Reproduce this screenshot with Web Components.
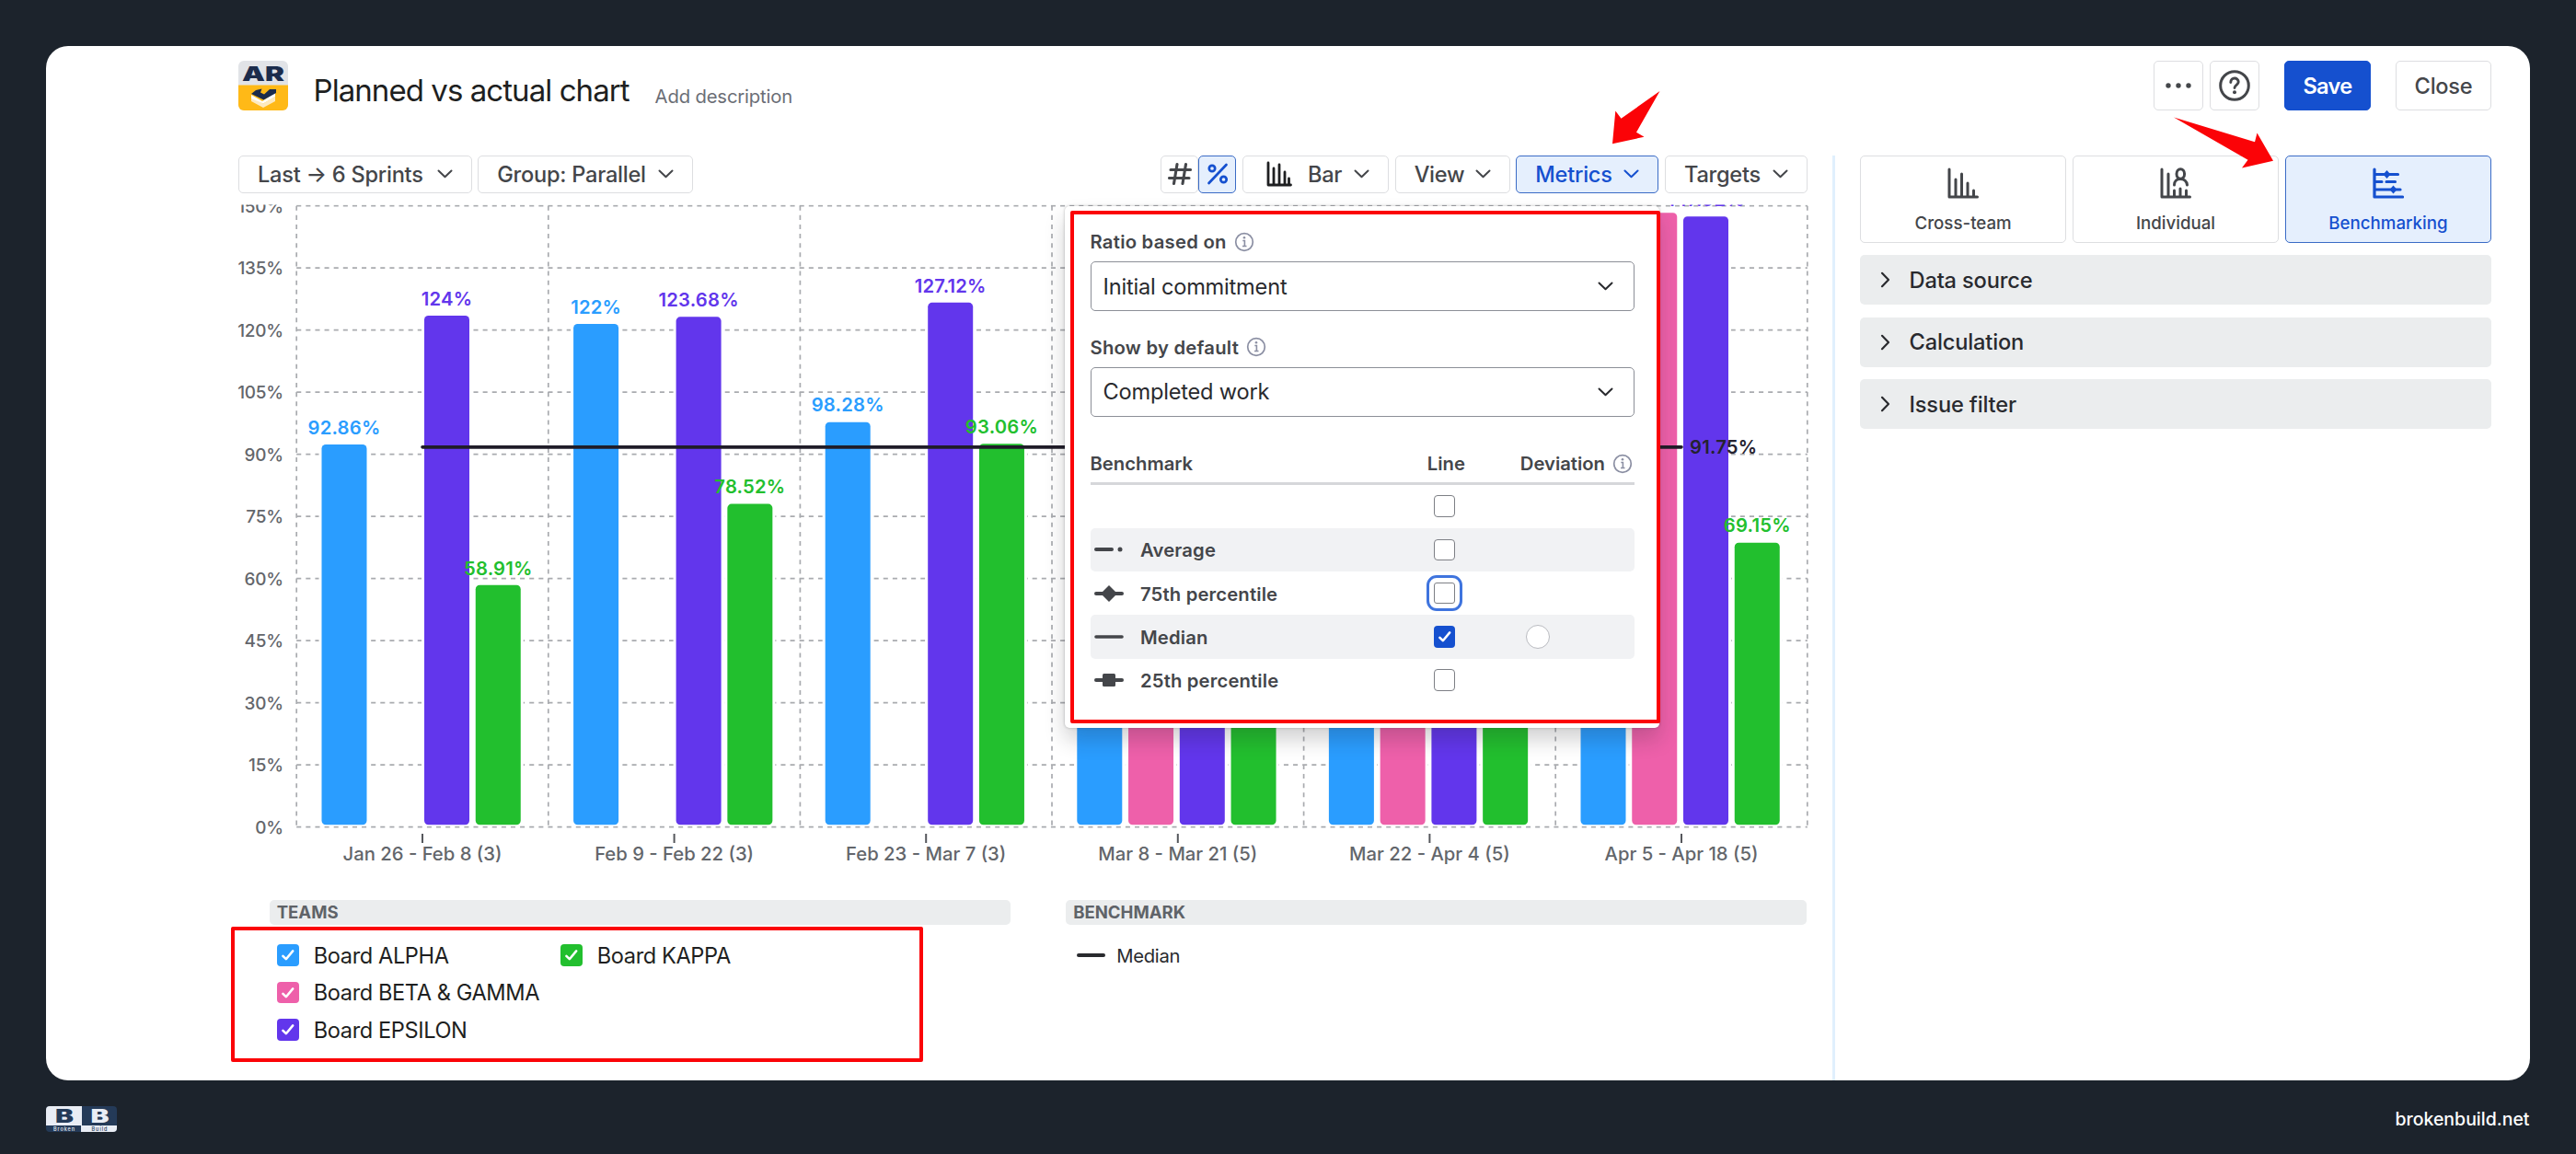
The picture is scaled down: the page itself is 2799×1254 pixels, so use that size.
<!DOCTYPE html>
<html lang="en">
<head>
<meta charset="utf-8">
<title>Planned vs actual chart</title>
<style>
    html, body {
        margin: 0;
        height: 100%;
        background: #1c232c;
        overflow: hidden;
    }
    body {
        font-family: Inter, "Liberation Sans", sans-serif;
        color: #44464a;
    }
</style>
</head>
<body>
<report-page></report-page>

<script>
const BLUE = '#1550cf';

function define(name, html, setup) {
    const template = document.createElement('template');
    template.innerHTML = html;
    customElements.define(name, class extends HTMLElement {
        constructor() {
            super();
            this.attachShadow({ mode: 'open' });
            this.shadowRoot.appendChild(template.content.cloneNode(true));
        }
        connectedCallback() {
            if (setup) {
                setup.call(this, this.shadowRoot);
            }
        }
    });
}

/* ---------- icons ---------- */

// name: [width, height, svg content]
const ICONS = {
    'chevron-down': [17, 10, '<path d="M1.5 1.5 8.5 8.3 15.5 1.5" fill="none" stroke="currentColor" stroke-width="2" stroke-linecap="round" stroke-linejoin="round"/>'],
    'chevron-right': [11, 18, '<path d="M2 1.8 9 9 2 16.2" fill="none" stroke="currentColor" stroke-width="2.2" stroke-linecap="round" stroke-linejoin="round"/>'],
    'hash': [26, 26, '<path d="M3 8.5H24.5M1.5 17.5H23M10 2.5 6.5 23.5M19.5 2.5 16 23.5" fill="none" stroke="currentColor" stroke-width="3.1" stroke-linecap="round"/>'],
    'percent': [24, 24, '<path d="M21.5 2 2.5 22" fill="none" stroke="currentColor" stroke-width="2.7" stroke-linecap="round"/><circle cx="6" cy="6" r="3.2" fill="none" stroke="currentColor" stroke-width="2.7"/><circle cx="18.5" cy="18" r="3.2" fill="none" stroke="currentColor" stroke-width="2.7"/>'],
    'bars': [34, 34, '<path d="M2 2V32H32.5M9 13V31M15.5 7V31M22 17V31M28.5 25V31" fill="none" stroke="currentColor" stroke-width="3" stroke-linecap="round" stroke-linejoin="round"/>'],
    'bars-small': [28, 28, '<path d="M2 2V26H26.5M8 8V25M14 4V25M20 12V25M24.5 19V25" fill="none" stroke="currentColor" stroke-width="2.8" stroke-linecap="round" stroke-linejoin="round"/>'],
    'person': [34, 34, '<path d="M2 2V32H32.5M9 7V31M15.5 25V31M22 23V31M28.5 25V31M15.5 19C15.5 15 18 12.5 22 12.5S29 15 29.5 19" fill="none" stroke="currentColor" stroke-width="3" stroke-linecap="round" stroke-linejoin="round"/><ellipse cx="22.3" cy="7" rx="4.3" ry="5.3" fill="none" stroke="currentColor" stroke-width="3"/>'],
    'sliders': [34, 34, '<path d="M2 2V32H32.5M3 7.5H27.5M3 15.5H10M15 15.5H24.5M3 24H30" fill="none" stroke="currentColor" stroke-width="3.2" stroke-linecap="round" stroke-linejoin="round"/><path d="M15.5 3 19.5 7.5 15.5 12 11.5 7.5ZM22.5 19.5 26.5 24 22.5 28.5 18.5 24Z" fill="currentColor"/>'],
    'more': [30, 8, '<g fill="currentColor"><circle cx="4" cy="4" r="2.7"/><circle cx="15" cy="4" r="2.7"/><circle cx="26" cy="4" r="2.7"/></g>'],
    'help': [36, 36, '<circle cx="18" cy="18" r="15.3" fill="none" stroke="currentColor" stroke-width="3"/><path d="M13.8 14.5C13.8 8.5 22.2 8.8 22.2 14C22.2 17.3 18 17.3 18 20.5" fill="none" stroke="currentColor" stroke-width="2.9" stroke-linecap="round"/><circle cx="18" cy="25.2" r="2" fill="currentColor"/>'],
    'info': [22, 22, '<circle cx="11" cy="11" r="9.3" fill="none" stroke="#8b8fa3" stroke-width="1.7"/><path d="M9.3 9.5H11.4V15.3M9 15.5H13.5" fill="none" stroke="#8b8fa3" stroke-width="1.6"/><circle cx="11" cy="6.3" r="1.3" fill="#8b8fa3"/>'],
    'average': [32, 20, '<path d="M2 10H19" stroke="currentColor" stroke-width="4" stroke-linecap="round"/><circle cx="28" cy="10" r="2.5" fill="currentColor"/>'],
    'p75': [32, 20, '<path d="M2 10H30" stroke="currentColor" stroke-width="4" stroke-linecap="round"/><path d="M16 1 25 10 16 19 7 10Z" fill="currentColor"/>'],
    'median': [32, 20, '<path d="M2 10H30" stroke="currentColor" stroke-width="3.6" stroke-linecap="round"/>'],
    'p25': [32, 20, '<path d="M2 10H30" stroke="currentColor" stroke-width="4" stroke-linecap="round"/><rect x="9" y="3" width="14" height="14" rx="1.5" fill="currentColor"/>']
};

define('app-icon', `
    <style>
        :host { display: inline-flex; flex: none; }
        svg { display: block; }
    </style>`, function (root) {
    const [w, h, body] = ICONS[this.getAttribute('name')];
    root.innerHTML += `<svg width="${w}" height="${h}" viewBox="0 0 ${w} ${h}">${body}</svg>`;
});

/* ---------- controls ---------- */

define('tool-button', `
    <style>
        :host {
            display: flex;
            align-items: center;
            justify-content: space-between;
            box-sizing: border-box;
            height: 40.5px;
            padding: 0 20px;
            border: 1.7px solid #dddee1;
            border-radius: 5px;
            background: #fff;
            font-size: 23.6px;
            font-weight: 500;
            letter-spacing: -.25px;
            white-space: nowrap;
        }
        :host([active]) {
            color: ${BLUE};
            background: #e5effd;
            border-color: #3a6bc6;
        }
        :host([square]) {
            justify-content: center;
            padding: 0;
        }
        :host([tall]) {
            height: 54px;
            justify-content: center;
            padding: 0;
        }
        :host([primary]) {
            color: #fff;
            background: ${BLUE};
            border-color: ${BLUE};
            font-weight: 600;
            letter-spacing: -.7px;
        }
        .label { display: flex; align-items: center; gap: 17px; }
    </style>
    <span class="label"><slot></slot></span>
    <slot name="end"></slot>`);

define('check-box', `
    <style>
        :host {
            display: inline-flex;
            box-sizing: border-box;
            width: 23.6px;
            height: 23.6px;
            border: 1.8px solid #7d7f85;
            border-radius: 4px;
            background: #fff;
            flex: none;
        }
        :host([checked]) { border: 0; background: var(--fill, ${BLUE}); }
        svg { display: none; }
        :host([checked]) svg { display: block; }
        :host([focused]) { outline: 3px solid #3f74de; outline-offset: 5.5px; border-radius: 3px; }
    </style>
    <svg width="23.6" height="23.6" viewBox="0 0 24 24"><path d="M6.5 13 10 16.5 17.5 7.5" fill="none" stroke="#fff" stroke-width="2.6" stroke-linecap="round" stroke-linejoin="round"/></svg>`);

define('select-field', `
    <style>
        :host { display: block; }
        .label {
            display: flex;
            align-items: center;
            gap: 8px;
            height: 24px;
            font-size: 20.25px;
            font-weight: 600;
            letter-spacing: .25px;
        }
        .box {
            display: flex;
            align-items: center;
            justify-content: space-between;
            box-sizing: border-box;
            height: 54px;
            margin-top: 9.5px;
            padding: 0 22px 0 13px;
            border: 1.7px solid #8c8f97;
            border-radius: 5px;
            font-size: 23.6px;
            letter-spacing: -.2px;
            color: #292a2e;
        }
    </style>
    <div class="label"><slot name="label"></slot><app-icon name="info"></app-icon></div>
    <div class="box"><slot></slot><app-icon name="chevron-down"></app-icon></div>`);

/* ---------- header ---------- */

define('app-logo', `
    <style>
        :host { display: block; width: 54px; height: 54px; }
        svg { display: block; }
    </style>
    <svg width="54" height="54" viewBox="0 0 54 54">
        <rect width="54" height="54" rx="6" fill="#e1e3e7"/>
        <path d="M0 26.5H54V48a6 6 0 0 1-6 6H6a6 6 0 0 1-6-6Z" fill="#ffb917"/>
        <text x="27" y="21.5" text-anchor="middle" textLength="46" lengthAdjust="spacingAndGlyphs" font-family="Inter" font-weight="900" font-size="22" fill="#1c2c4c">AR</text>
        <path d="M14 40 27 46.5 40 39V44L27 51 14 44Z" fill="#fdeac0"/>
        <path d="M14 37 26 44 40 34.5V39L27 46.5 14 41Z" fill="#fff"/>
        <path d="M14 36 19 32 25.5 30.5 24 34.5 28 36.5 34 31H41V35L27.5 42.5Z" fill="#1c2c4c"/>
    </svg>`);

define('page-header', `
    <style>
        :host { display: flex; align-items: center; height: 54px; }
        .title {
            margin-left: 27.5px;
            padding-top: 10px;
            font-size: 33px;
            line-height: 40px;
            letter-spacing: -.94px;
            color: #1e1f21;
        }
        .desc {
            margin-left: 28px;
            padding-top: 22px;
            font-size: 20.25px;
            letter-spacing: -.15px;
            color: #6b6e76;
        }
        .actions { display: flex; margin-left: auto; }
    </style>
    <app-logo></app-logo>
    <div class="title">Planned vs actual chart</div>
    <div class="desc">Add description</div>
    <div class="actions">
        <tool-button tall style="width:54px"><app-icon name="more"></app-icon></tool-button>
        <tool-button tall style="width:54px;margin-left:7px"><app-icon name="help"></app-icon></tool-button>
        <tool-button tall primary style="width:94px;margin-left:27px">Save</tool-button>
        <tool-button tall style="width:104px;margin-left:27px">Close</tool-button>
    </div>`);

define('chart-toolbar', `
    <style>
        :host { display: flex; gap: 6.7px; }
        .push { margin-left: auto; display: flex; }
    </style>
    <tool-button style="width:253.5px">Last → 6 Sprints<app-icon slot="end" name="chevron-down"></app-icon></tool-button>
    <tool-button style="width:234px">Group: Parallel<app-icon slot="end" name="chevron-down"></app-icon></tool-button>
    <div class="push">
        <tool-button square style="width:41px"><app-icon name="hash"></app-icon></tool-button>
        <tool-button square active style="width:41px"><app-icon name="percent"></app-icon></tool-button>
    </div>
    <tool-button style="width:159px"><app-icon name="bars-small" style="color:#1e1f21;margin-left:5px"></app-icon>Bar<app-icon slot="end" name="chevron-down"></app-icon></tool-button>
    <tool-button style="width:125px">View<app-icon slot="end" name="chevron-down"></app-icon></tool-button>
    <tool-button active style="width:155px">Metrics<app-icon slot="end" name="chevron-down"></app-icon></tool-button>
    <tool-button style="width:155px">Targets<app-icon slot="end" name="chevron-down"></app-icon></tool-button>`);

/* ---------- chart ---------- */

const COLORS = { alpha: '#2a9dff', beta: '#ee60aa', epsilon: '#6236ec', kappa: '#22bf2e' };

// a negative value draws the bar without its label
const SPRINTS = [
    { name: 'Jan 26 - Feb 8 (3)', bars: [92.86, 0, 124, 58.91] },
    { name: 'Feb 9 - Feb 22 (3)', bars: [122, 0, 123.68, 78.52] },
    { name: 'Feb 23 - Mar 7 (3)', bars: [98.28, 0, 127.12, 93.06] },
    { name: 'Mar 8 - Mar 21 (5)', bars: [-90, -80, -95, -85] },
    { name: 'Mar 22 - Apr 4 (5)', bars: [-90, -80, -95, -85] },
    { name: 'Apr 5 - Apr 18 (5)', bars: [-90, -148.8, 147.92, 69.15] }
];

define('benchmark-chart', `
    <style>
        :host { display: block; height: 727px; }
        svg { display: block; overflow: visible; clip-path: inset(0 -10px); }
        .grid { stroke: #a9abaf; stroke-width: 1.7; stroke-dasharray: 5.06 5.06; }
        .axis { font-size: 20.25px; font-weight: 500; fill: #63666b; }
        .percent { font-size: 18.9px; letter-spacing: -.2px; }
        .value { font-size: 20.25px; font-weight: 600; letter-spacing: .2px; }
    </style>
    <svg width="1712" height="727" font-family="Inter, sans-serif"></svg>`, function (root) {
    const left = 63.2;
    const group = 273.6;
    const base = 675.7;
    const unit = 4.5;
    const right = left + group * 6;
    const y = (v) => base - v * unit;
    const fills = Object.values(COLORS);
    let out = '';

    for (let v = 0; v <= 150; v += 15) {
        out += `<path class="grid" d="M${left} ${y(v)}H${right}"/>`;
        out += `<text class="axis percent" x="48.8" y="${y(v) + 6.8}" text-anchor="end">${v}%</text>`;
    }
    for (let i = 0; i <= 6; i++) {
        out += `<path class="grid" d="M${left + i * group} ${y(150)}V${base}"/>`;
    }

    let labels = '';
    SPRINTS.forEach((sprint, i) => {
        const x0 = left + i * group;
        const mid = x0 + group / 2;
        sprint.bars.forEach((value, j) => {
            if (!value) {
                return;
            }
            const x = x0 + 27.3 + j * 55.75;
            const top = y(Math.abs(value)) + 2.2;
            out += `<rect x="${x - 3}" y="${top - 2}" width="55" height="${base - top + 1}" rx="6" fill="#fff"/>`;
            out += `<rect x="${x}" y="${top}" width="49" height="${base - 2.5 - top}" rx="4.5" fill="${fills[j]}"/>`;
            if (value > 0) {
                labels += `<text class="value" x="${x + 24.5}" y="${top - 11.3}" text-anchor="middle" fill="${fills[j]}">${value}%</text>`;
            }
        });
        out += `<path d="M${mid} 683V693" stroke="#55575c" stroke-width="2"/>`;
        out += `<text class="axis" x="${mid}" y="711.7" text-anchor="middle">${sprint.name}</text>`;
    });

    const my = y(91.75);
    out += labels;
    out += `<path d="M${left + group / 2} ${my}H${right - group / 2}" stroke="#1f1c28" stroke-width="3.6" stroke-linecap="round"/>`;
    out += `<text class="value" x="1577" y="${my + 7.3}" fill="#25222f">91.75%</text>`;
    root.querySelector('svg').innerHTML = out;
});

/* ---------- metrics popup ---------- */

define('benchmark-row', `
    <style>
        :host {
            display: grid;
            grid-template-columns: 54.5px 1fr 70px 171px;
            align-items: center;
            height: 47.25px;
            border-radius: 5px;
            font-size: 20.25px;
            font-weight: 600;
            letter-spacing: .15px;
        }
        :host([shaded]) { background: #f1f2f4; }
        .icon { display: flex; padding-left: 4.5px; }
        .name { padding-top: 1px; }
        .line { display: flex; justify-content: center; }
        .dev { padding-left: 53px; display: flex; }
        .radio {
            box-sizing: border-box;
            width: 26px;
            height: 26px;
            border: 1.5px solid #b9bbc0;
            border-radius: 50%;
            background: #fff;
        }
    </style>
    <div class="icon"><slot name="icon"></slot></div>
    <div class="name"><slot></slot></div>
    <div class="line"><check-box></check-box></div>
    <div class="dev"></div>`, function (root) {
    const box = root.querySelector('check-box');
    box.toggleAttribute('checked', this.hasAttribute('checked'));
    box.toggleAttribute('focused', this.hasAttribute('focused'));
    if (this.hasAttribute('radio')) {
        root.querySelector('.dev').innerHTML = '<div class="radio"></div>';
    }
});

define('metrics-popup', `
    <style>
        :host {
            display: block;
            box-sizing: border-box;
            width: 646px;
            height: 567px;
            padding: 26.5px 27.5px 0;
            border-radius: 5px;
            background: #fff;
            box-shadow: 0 13px 22px rgba(30, 31, 33, .2), 0 0 3px rgba(30, 31, 33, .3);
        }
        select-field + select-field { margin-top: 27px; }
        .head {
            display: flex;
            align-items: center;
            height: 24px;
            margin-top: 39px;
            padding-bottom: 8px;
            border-bottom: 3.4px solid #d6d7da;
            font-size: 20.25px;
            font-weight: 600;
        }
        .head .line { margin-left: auto; width: 40px; text-align: center; }
        .head .dev { display: flex; align-items: center; gap: 8px; margin: 0 1.5px 0 61px; }
    </style>
    <select-field><span slot="label">Ratio based on</span>Initial commitment</select-field>
    <select-field><span slot="label">Show by default</span>Completed work</select-field>
    <div class="head">
        <span>Benchmark</span>
        <span class="line">Line</span>
        <span class="dev">Deviation<app-icon name="info"></app-icon></span>
    </div>
    <benchmark-row></benchmark-row>
    <benchmark-row shaded><app-icon slot="icon" name="average"></app-icon>Average</benchmark-row>
    <benchmark-row focused><app-icon slot="icon" name="p75"></app-icon>75th percentile</benchmark-row>
    <benchmark-row shaded checked radio><app-icon slot="icon" name="median"></app-icon>Median</benchmark-row>
    <benchmark-row><app-icon slot="icon" name="p25"></app-icon>25th percentile</benchmark-row>`);

/* ---------- legend ---------- */

define('legend-group', `
    <style>
        :host { display: block; }
        .head {
            height: 27px;
            line-height: 27px;
            padding-left: 8px;
            border-radius: 5px;
            background: #ebedee;
            font-size: 18.56px;
            font-weight: 700;
            color: #5f6368;
        }
    </style>
    <div class="head"><slot name="head"></slot></div>
    <slot></slot>`);

define('team-item', `
    <style>
        :host {
            display: flex;
            align-items: center;
            gap: 16px;
            height: 40.4px;
            font-size: 23.6px;
            letter-spacing: -.4px;
            color: #1e1f21;
            white-space: nowrap;
        }
    </style>
    <check-box checked></check-box><span><slot></slot></span>`, function (root) {
    root.querySelector('check-box').style.setProperty('--fill', COLORS[this.getAttribute('team')]);
});

define('chart-legend', `
    <style>
        :host { display: grid; grid-template-columns: 805.5px 805px; gap: 60px; padding-left: 33.7px; }
        .teams {
            display: grid;
            grid-template-columns: 308px 308px;
            padding: 13.5px 0 0 8.5px;
        }
        .median {
            display: flex;
            align-items: center;
            gap: 12px;
            height: 24px;
            padding: 21.5px 0 0 12px;
            font-size: 20.25px;
            letter-spacing: -.3px;
            color: #292a2e;
        }
        .median i { width: 31px; height: 4px; border-radius: 2px; background: #292a2e; }
    </style>
    <legend-group>
        <span slot="head">TEAMS</span>
        <div class="teams">
            <team-item team="alpha">Board ALPHA</team-item>
            <team-item team="kappa">Board KAPPA</team-item>
            <team-item team="beta" style="grid-column:1 / -1">Board BETA &amp; GAMMA</team-item>
            <team-item team="epsilon">Board EPSILON</team-item>
        </div>
    </legend-group>
    <legend-group>
        <span slot="head">BENCHMARK</span>
        <div class="median"><i></i><span>Median</span></div>
    </legend-group>`);

/* ---------- side panel ---------- */

define('mode-tab', `
    <style>
        :host {
            display: flex;
            flex-direction: column;
            align-items: center;
            box-sizing: border-box;
            flex: 1;
            height: 94.5px;
            padding-top: 12px;
            border: 1.7px solid #dddee1;
            border-radius: 5px;
            font-size: 18.7px;
            font-weight: 500;
        }
        :host([active]) {
            color: ${BLUE};
            background: #e5effd;
            border-color: #3a6bc6;
        }
        span { margin-top: 13.5px; line-height: 26px; }
    </style>
    <slot name="icon"></slot>
    <span><slot></slot></span>`);

define('panel-section', `
    <style>
        :host {
            display: flex;
            align-items: center;
            gap: 21px;
            height: 54px;
            margin-top: 13.5px;
            padding-left: 21.5px;
            border-radius: 5px;
            background: #ebedee;
            font-size: 23.6px;
            font-weight: 500;
            letter-spacing: -.15px;
            color: #292a2e;
        }
    </style>
    <app-icon name="chevron-right"></app-icon><span><slot></slot></span>`);

define('side-panel', `
    <style>
        :host {
            display: block;
            box-sizing: border-box;
            width: 716.5px;
            padding-left: 27.5px;
            border-left: 3px solid #e0f0fd;
        }
        .tabs { display: flex; gap: 6.7px; }
    </style>
    <div class="tabs">
        <mode-tab><app-icon slot="icon" name="bars"></app-icon>Cross-team</mode-tab>
        <mode-tab><app-icon slot="icon" name="person"></app-icon>Individual</mode-tab>
        <mode-tab active><app-icon slot="icon" name="sliders"></app-icon>Benchmarking</mode-tab>
    </div>
    <panel-section>Data source</panel-section>
    <panel-section>Calculation</panel-section>
    <panel-section>Issue filter</panel-section>`);

/* ---------- footer and page ---------- */

define('brand-mark', `
    <style>
        :host { display: block; }
        svg { display: block; }
    </style>
    <svg width="77" height="28" viewBox="0 0 77 28" font-family="Inter, sans-serif" text-anchor="middle">
        <rect width="77" height="28" rx="4" fill="#243a58"/>
        <path d="M4 0H38V21H0V4a4 4 0 0 1 4-4Z" fill="#e9edf5"/>
        <path d="M39 21H77V24a4 4 0 0 1-4 4H39Z" fill="#e9edf5"/>
        <path d="M38.5 0V28" stroke="#e9edf5"/>
        <text x="20" y="18" font-size="20" font-weight="900" textLength="20" lengthAdjust="spacingAndGlyphs" fill="#243a58">B</text>
        <text x="58.5" y="18" font-size="20" font-weight="900" textLength="20" lengthAdjust="spacingAndGlyphs" fill="#e9edf5">B</text>
        <text x="19.5" y="26.5" font-size="5.5" textLength="23" fill="#e9edf5">Broken</text>
        <text x="58" y="26.5" font-size="5.5" textLength="17" fill="#243a58">Build</text>
    </svg>`);

// red marker frame laid over the content
define('marker-frame', `
    <style>
        :host {
            position: absolute;
            box-sizing: border-box;
            border: 4px solid #fb0307;
            border-radius: 2px;
        }
    </style>`);

define('report-page', `
    <style>
        :host {
            display: flex;
            flex-direction: column;
            position: relative;
            box-sizing: border-box;
            width: 2799px;
            height: 1254px;
            padding: 50px 50.5px 0 50px;
        }
        .card {
            display: flex;
            flex: none;
            flex-direction: column;
            box-sizing: border-box;
            height: 1123.5px;
            padding: 16px 41.5px 0 209px;
            border-radius: 24px;
            background: #fff;
        }
        .main { display: flex; justify-content: space-between; flex: 1; margin-top: 49px; }
        .left { width: 1705px; }
        benchmark-chart { margin-top: 13.1px; }
        chart-legend { margin-top: 28px; }
        .foot {
            display: flex;
            align-items: center;
            justify-content: space-between;
            height: 56px;
            padding-top: 14.5px;
            color: #fff;
            font-size: 19.5px;
            font-weight: 500;
        }
        metrics-popup { position: absolute; left: 1157px; top: 224px; }
        .arrows { position: absolute; left: 0; top: 0; pointer-events: none; }
    </style>
    <div class="card">
        <page-header></page-header>
        <div class="main">
            <div class="left">
                <chart-toolbar></chart-toolbar>
                <benchmark-chart></benchmark-chart>
                <chart-legend></chart-legend>
            </div>
            <side-panel></side-panel>
        </div>
    </div>
    <div class="foot"><brand-mark></brand-mark><span>brokenbuild.net</span></div>
    <metrics-popup></metrics-popup>
    <marker-frame style="left:1163px;top:228.5px;width:641px;height:557px"></marker-frame>
    <marker-frame style="left:251px;top:1006.5px;width:751.5px;height:147px"></marker-frame>
    <svg class="arrows" width="2799" height="300" fill="#fb0307">
        <path d="M1803.5 99 1778 143.7 1786.5 148.7 1752 156.3 1755.3 120.5 1761.5 128.8Z"/>
        <path d="M2362 127.5 2450 154.3 2452.5 144.5 2470 174.7 2436 182.5 2442.5 173.7Z"/>
    </svg>`);
</script>
</body>
</html>
